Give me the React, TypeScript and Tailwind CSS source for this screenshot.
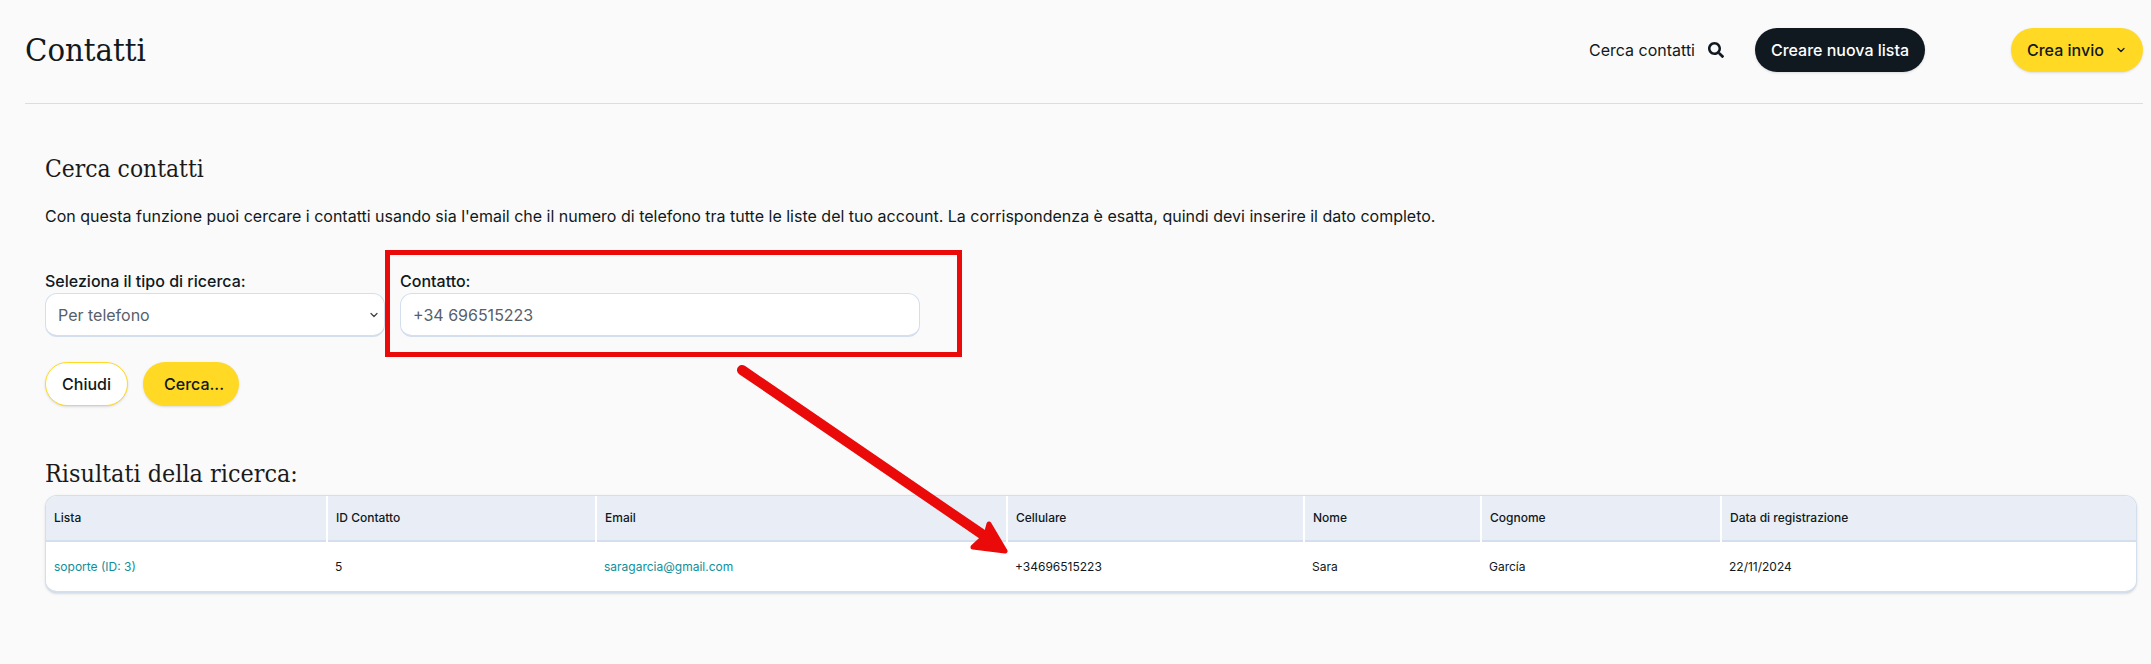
import { ChevronDown } from "lucide-react";
import { FaSearch } from "react-icons/fa";

const serif = "[font-family:'DejaVu_Serif_Condensed','DejaVu_Serif',serif]";
const heads = [
  ["Lista", "w-[281px]"],
  ["ID Contatto", "w-[269px]"],
  ["Email", "w-[411px]"],
  ["Cellulare", "w-[297px]"],
  ["Nome", "w-[177px]"],
  ["Cognome", "w-[240px]"],
  ["Data di registrazione", ""],
];

export default function App() {
  return (
    <div className="relative h-[664px] w-[2151px] overflow-hidden bg-[#fafafa] font-['Inter',sans-serif] text-[#101820]">
      <header className="ml-[25px] mr-[8px] flex h-[104px] items-center border-b border-[#d3dfec] pb-[4px]">
        <h1 className={`${serif} text-[32.5px] font-normal leading-[40px]`}>Contatti</h1>
        <div className="ml-auto flex items-center">
          <span className="text-[16px]">Cerca contatti</span>
          <FaSearch className="ml-[13px] h-[16px] w-[16px]" />
          <button className="ml-[31px] h-[44px] w-[170px] rounded-full bg-[#101820] text-[16px] font-medium text-white shadow-sm">
            Creare nuova lista
          </button>
          <button className="ml-[86px] flex h-[44px] w-[132px] items-center rounded-full bg-[#ffd924] pl-[16px] text-[16px] font-medium shadow-sm">
            Crea invio
            <ChevronDown className="ml-[11px] h-[12px] w-[12px]" strokeWidth={2.5} />
          </button>
        </div>
      </header>

      <main className="ml-[45px] mr-[13px]">
        <h2 className={`${serif} mt-[49px] text-[24.4px] font-normal leading-[32px] text-[#1a1a1a]`}>Cerca contatti</h2>
        <p className="mt-[19px] text-[16px] leading-[24px]">
          Con questa funzione puoi cercare i contatti usando sia l'email che il numero di telefono tra tutte le liste del tuo account. La corrispondenza è esatta, quindi devi inserire il dato completo.
        </p>

        <div className="mt-[41px] flex gap-[15px]">
          <div className="w-[340px]">
            <label className="block text-[16px] font-medium leading-[24px]">Seleziona il tipo di ricerca:</label>
            <div className="flex h-[44px] items-center justify-between rounded-[12px] border border-b-2 border-[#d3dfec] bg-white pl-[12px] pr-[4px] text-[16px] text-[#56606b]">
              Per telefono
              <ChevronDown className="h-[12px] w-[12px] text-[#444]" strokeWidth={2.5} />
            </div>
          </div>
          <div className="w-[520px]">
            <label className="block text-[16px] font-medium leading-[24px]">Contatto:</label>
            <div className="flex h-[44px] items-center rounded-[12px] border border-b-2 border-[#d3dfec] bg-white pl-[12px] text-[16px] text-[#56606b]">
              +34 696515223
            </div>
          </div>
        </div>

        <div className="mt-[25px] flex gap-[15px]">
          <button className="h-[44px] w-[83px] rounded-full border border-[#ffd924] bg-white text-[16px] font-medium shadow-sm">Chiudi</button>
          <button className="h-[44px] w-[96px] rounded-full bg-[#ffd924] pl-[21px] text-left text-[16px] font-medium shadow-sm">Cerca...</button>
        </div>

        <h2 className={`${serif} mt-[52px] text-[24.9px] font-normal leading-[32px] text-[#1a1a1a]`}>Risultati della ricerca:</h2>

        <div className="mr-[1px] mt-[5px] overflow-hidden rounded-[12px] border border-b-2 border-[#d3dfec] bg-white shadow-sm">
          <table className="w-full table-fixed border-collapse text-left text-[12px]">
            <thead>
              <tr className="h-[45px] border-b-2 border-[#d3dfec] bg-[#e9eef6]">
                {heads.map(([h, w], i) => (
                  <th key={h} className={`${w} px-[8px] font-medium ${i < 6 ? "border-r-2 border-white" : ""}`}>{h}</th>
                ))}
              </tr>
            </thead>
            <tbody>
              <tr className="h-[50px]">
                <td className="px-[8px] text-[#0f8f9a]">soporte (ID: 3)</td>
                <td className="px-[8px]">5</td>
                <td className="px-[8px] text-[#0f8f9a]">saragarcia@gmail.com</td>
                <td className="px-[8px]">+34696515223</td>
                <td className="px-[8px]">Sara</td>
                <td className="px-[8px]">García</td>
                <td className="px-[8px]">22/11/2024</td>
              </tr>
            </tbody>
          </table>
        </div>
      </main>

      {/* annotation overlay */}
      <div className="absolute left-[385px] top-[250px] h-[107px] w-[577px] border-[5px] border-[#ea0a0a]" />
      <svg className="absolute left-0 top-0" width="2151" height="664" fill="none">
        <path d="M742 370 L995 543" stroke="#ea0a0a" strokeWidth="10" strokeLinecap="round" />
        <path d="M989 524 L1005 551 L973 547 L986 535 Z" fill="#ea0a0a" stroke="#ea0a0a" strokeWidth="5" strokeLinejoin="round" />
      </svg>
    </div>
  );
}
